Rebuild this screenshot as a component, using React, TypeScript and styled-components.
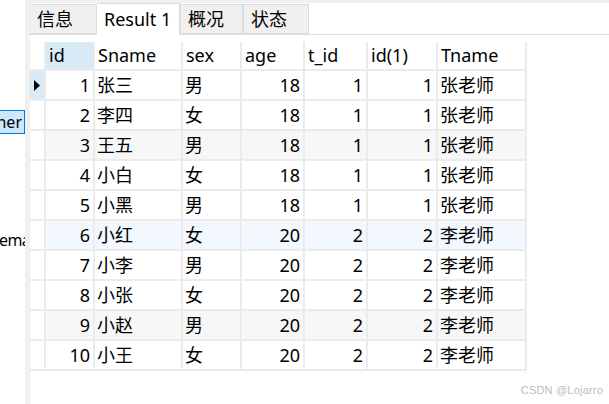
import styled, { createGlobalStyle } from 'styled-components';

const GlobalStyle = createGlobalStyle`
  html, body {
    margin: 0;
    padding: 0;
    background: #ffffff;
  }
  body {
    font-family: "Noto Sans", "Noto Sans CJK SC", sans-serif;
    color: #000000;
  }
`;

const COLS = [16, 49, 88, 59, 63, 63, 70, 89];
const HEADERS = ['id', 'Sname', 'sex', 'age', 't_id', 'id(1)', 'Tname'];
const NUMERIC = [true, false, false, true, true, true, false];

const ROWS: (string | number)[][] = [
  [1, '张三', '男', 18, 1, 1, '张老师'],
  [2, '李四', '女', 18, 1, 1, '张老师'],
  [3, '王五', '男', 18, 1, 1, '张老师'],
  [4, '小白', '女', 18, 1, 1, '张老师'],
  [5, '小黑', '男', 18, 1, 1, '张老师'],
  [6, '小红', '女', 20, 2, 2, '李老师'],
  [7, '小李', '男', 20, 2, 2, '李老师'],
  [8, '小张', '女', 20, 2, 2, '李老师'],
  [9, '小赵', '男', 20, 2, 2, '李老师'],
  [10, '小王', '女', 20, 2, 2, '李老师'],
];

type Tone = 'plain' | 'stripe' | 'hover';
const TONES: Record<Tone, string> = {
  plain: '#ffffff',
  stripe: '#f7f7f7',
  hover: '#f2f8fd',
};
const rowTone = (i: number): Tone => {
  if (i === 5) return 'hover';
  if (i === 2 || i === 8) return 'stripe';
  return 'plain';
};

const Page = styled.div`
  position: relative;
  display: flex;
  flex-direction: row;
  width: 609px;
  height: 404px;
  overflow: hidden;
`;

const SidePanel = styled.div`
  width: 25px;
  flex: none;
  display: flex;
  flex-direction: column;
  overflow: hidden;
  background: #ffffff;
  font-size: 16px;
`;

const SideSelected = styled.div`
  margin-top: 110px;
  height: 22px;
  display: flex;
  align-items: center;
  justify-content: flex-end;
  padding-right: 2px;
  background: #cce8ff;
  border: 1px solid #0078d7;
  border-left: none;
  white-space: nowrap;
  line-height: 1;
`;

const SideLabel = styled.div`
  margin-top: 94px;
  margin-left: -1px;
  height: 24px;
  display: flex;
  align-items: center;
  white-space: nowrap;
  line-height: 1;
  letter-spacing: -0.6px;
`;

const Splitter = styled.div`
  width: 5px;
  flex: none;
  background: #f0f0f0;
`;

const Main = styled.div`
  flex: 1;
  display: flex;
  flex-direction: column;
  min-width: 0;
`;

const TabBar = styled.div`
  height: 31px;
  display: flex;
  align-items: flex-end;
  border-top: 3px solid #f0f0f0;
  border-bottom: 1px solid #dcdcdc;
  background: #ffffff;
`;

const Tab = styled.div<{ $w: number; $active?: boolean }>`
  box-sizing: border-box;
  width: ${({ $w }) => $w}px;
  height: ${({ $active }) => ($active ? 32 : 30)}px;
  margin-bottom: ${({ $active }) => ($active ? -1 : 0)}px;
  padding-left: 7px;
  display: flex;
  align-items: center;
  font-size: 18px;
  line-height: 1;
  background: ${({ $active }) => ($active ? '#ffffff' : '#f0f0f0')};
  border: 1px solid #dcdcdc;
  border-bottom: ${({ $active }) => ($active ? 'none' : '1px solid #dcdcdc')};
  border-left: ${({ $active }) => ($active ? 'none' : '1px solid #dcdcdc')};
  padding-bottom: ${({ $active }) => ($active ? 2 : 0)}px;
  &:first-child {
    border-left: none;
  }
`;

const GridWrap = styled.div`
  padding-top: 7px;
`;

const Grid = styled.div`
  display: grid;
  grid-template-columns: ${COLS.map((c) => `${c}px`).join(' ')};
  grid-template-rows: 29px repeat(${ROWS.length}, 30px);
  width: max-content;
  font-size: 18px;
  line-height: 1;
`;

const Cell = styled.div<{ $bg: string; $right?: boolean }>`
  box-sizing: border-box;
  display: flex;
  align-items: center;
  justify-content: ${({ $right }) => ($right ? 'flex-end' : 'flex-start')};
  padding: 0 ${({ $right }) => ($right ? 3 : 2)}px 0 2px;
  background: ${({ $bg }) => $bg};
  border-right: 2px solid #ebebeb;
  border-bottom: 2px solid #ebebeb;
  white-space: nowrap;
  overflow: hidden;
`;

const HeaderCell = styled(Cell)`
  padding-left: 3px;
  padding-bottom: 1px;
`;

const Indicator = styled(Cell)`
  justify-content: center;
  padding: 0;
`;

const Watermark = styled.div`
  position: absolute;
  right: 6px;
  bottom: 8px;
  font-family: "Liberation Sans", sans-serif;
  font-size: 11px;
  color: #bdbdbd;
  letter-spacing: 0.2px;
`;

const TABS = [
  { label: '信息', w: 67 },
  { label: 'Result 1', w: 83, active: true },
  { label: '概况', w: 63 },
  { label: '状态', w: 66 },
];

const SELECTED = '#d9eaf7';

export default function App() {
  return (
    <>
      <GlobalStyle />
      <Page>
        <SidePanel>
          <SideSelected>ner</SideSelected>
          <SideLabel>ema</SideLabel>
        </SidePanel>
        <Splitter />
        <Main>
          <TabBar>
            {TABS.map((t) => (
              <Tab key={t.label} $w={t.w} $active={t.active}>
                {t.label}
              </Tab>
            ))}
          </TabBar>
          <GridWrap>
            <Grid>
              <Indicator $bg="#ffffff" />
              {HEADERS.map((h, i) => (
                <HeaderCell key={h} $bg={i === 0 ? SELECTED : '#ffffff'}>
                  {h}
                </HeaderCell>
              ))}
              {ROWS.map((row, r) => {
                const bg = TONES[rowTone(r)];
                return [
                  <Indicator key={`ind${r}`} $bg={r === 0 ? SELECTED : '#ffffff'}>
                    {r === 0 && (
                      <svg width="6" height="11" viewBox="0 0 6 11">
                        <path d="M0 0 L6 5.5 L0 11 Z" fill="#000" />
                      </svg>
                    )}
                  </Indicator>,
                  ...row.map((v, c) => (
                    <Cell key={`${r}-${c}`} $bg={bg} $right={NUMERIC[c]}>
                      {v}
                    </Cell>
                  )),
                ];
              })}
            </Grid>
          </GridWrap>
        </Main>
        <Watermark>CSDN @Lojarro</Watermark>
      </Page>
    </>
  );
}
